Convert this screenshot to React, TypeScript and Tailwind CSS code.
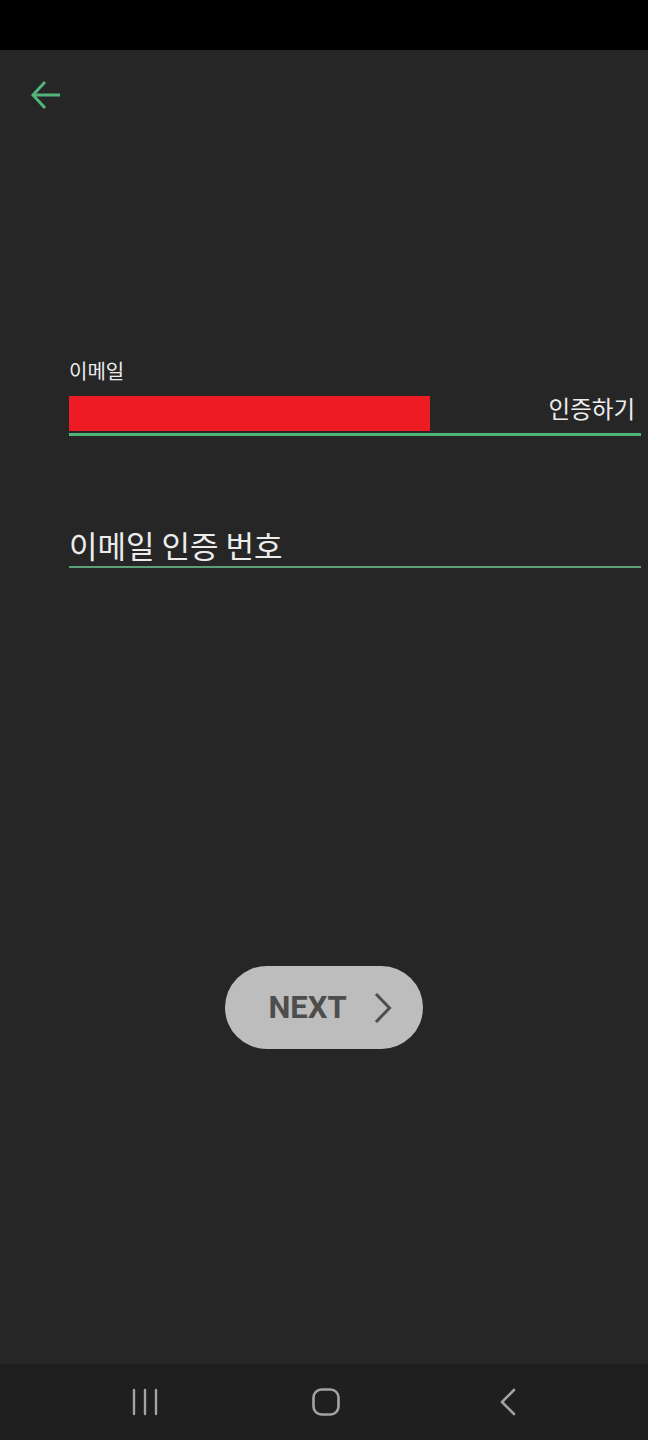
import React from "react";

function BackArrow() {
    return (
        <svg width="30" height="30" viewBox="0 0 30 30" fill="none" stroke="#52b47a" strokeWidth="3">
            <path d="M14 2 L2 15 L14 28" strokeLinejoin="miter" />
            <path d="M2.5 15 H29" />
        </svg>
    );
}

function NavBar() {
    return (
        <nav className="flex h-[76px] items-center bg-[#1f1f1f]">
            {/* recents */}
            <svg className="ml-[131px]" width="28" height="28" viewBox="0 0 28 28" fill="none" stroke="#a3a3a3" strokeWidth="2.4" strokeLinecap="round">
                <path d="M3 2 V26 M14 2 V26 M25 2 V26" />
            </svg>
            {/* home */}
            <svg className="ml-[153px]" width="28" height="28" viewBox="0 0 28 28" fill="none" stroke="#a3a3a3" strokeWidth="2.6">
                <rect x="1.5" y="1.5" width="25" height="25" rx="8" />
            </svg>
            {/* back */}
            <svg className="ml-[160px]" width="16" height="28" viewBox="0 0 16 28" fill="none" stroke="#a3a3a3" strokeWidth="2.6" strokeLinecap="round" strokeLinejoin="round">
                <path d="M14 2 L2 14 L14 26" />
            </svg>
        </nav>
    );
}

export default function App() {
    return (
        <div className="flex min-h-[1440px] w-full flex-col bg-[#262626] font-['Noto_Sans_CJK_KR',sans-serif]">
            <div className="h-[50px] shrink-0 bg-black" />

            <header className="flex h-[90px] items-center pl-[31px]">
                <BackArrow />
            </header>

            <main className="flex flex-1 flex-col">
                {/* email field */}
                <section className="ml-[69px] mr-[7px] mt-[219px]">
                    <label className="block text-[20px] leading-[24px] text-[#ececec]">이메일</label>
                    <div className="mt-[10px] flex items-end justify-between border-b-[3px] border-[#4fb477] pb-[2px]">
                        <div className="h-[35px] w-[361px] bg-[#ed1c24]" />
                        <button className="mr-[6px] mb-[8px] text-[23.5px] leading-[30px] text-[#ececec]">인증하기</button>
                    </div>
                </section>

                {/* verification code field */}
                <section className="ml-[69px] mr-[7px] mt-[90px] border-b-[2px] border-[#5d9f77] pb-[2px]">
                    <p className="text-[31px] leading-[38px] text-[#ececec]">이메일 인증 번호</p>
                </section>

                <div className="mt-[398px] flex justify-center">
                    <button className="flex h-[83px] w-[198px] items-center justify-center gap-[27px] rounded-full bg-[#bdbdbd] pl-[12px]">
                        <span className="font-['Roboto',sans-serif] text-[31px] font-bold leading-none text-[#4d4d4d]">NEXT</span>
                        <svg width="18" height="30" viewBox="0 0 18 30" fill="none" stroke="#4d4d4d" strokeWidth="3">
                            <path d="M2 1 L15.5 15 L2 29" />
                        </svg>
                    </button>
                </div>
            </main>

            <NavBar />
        </div>
    );
}
